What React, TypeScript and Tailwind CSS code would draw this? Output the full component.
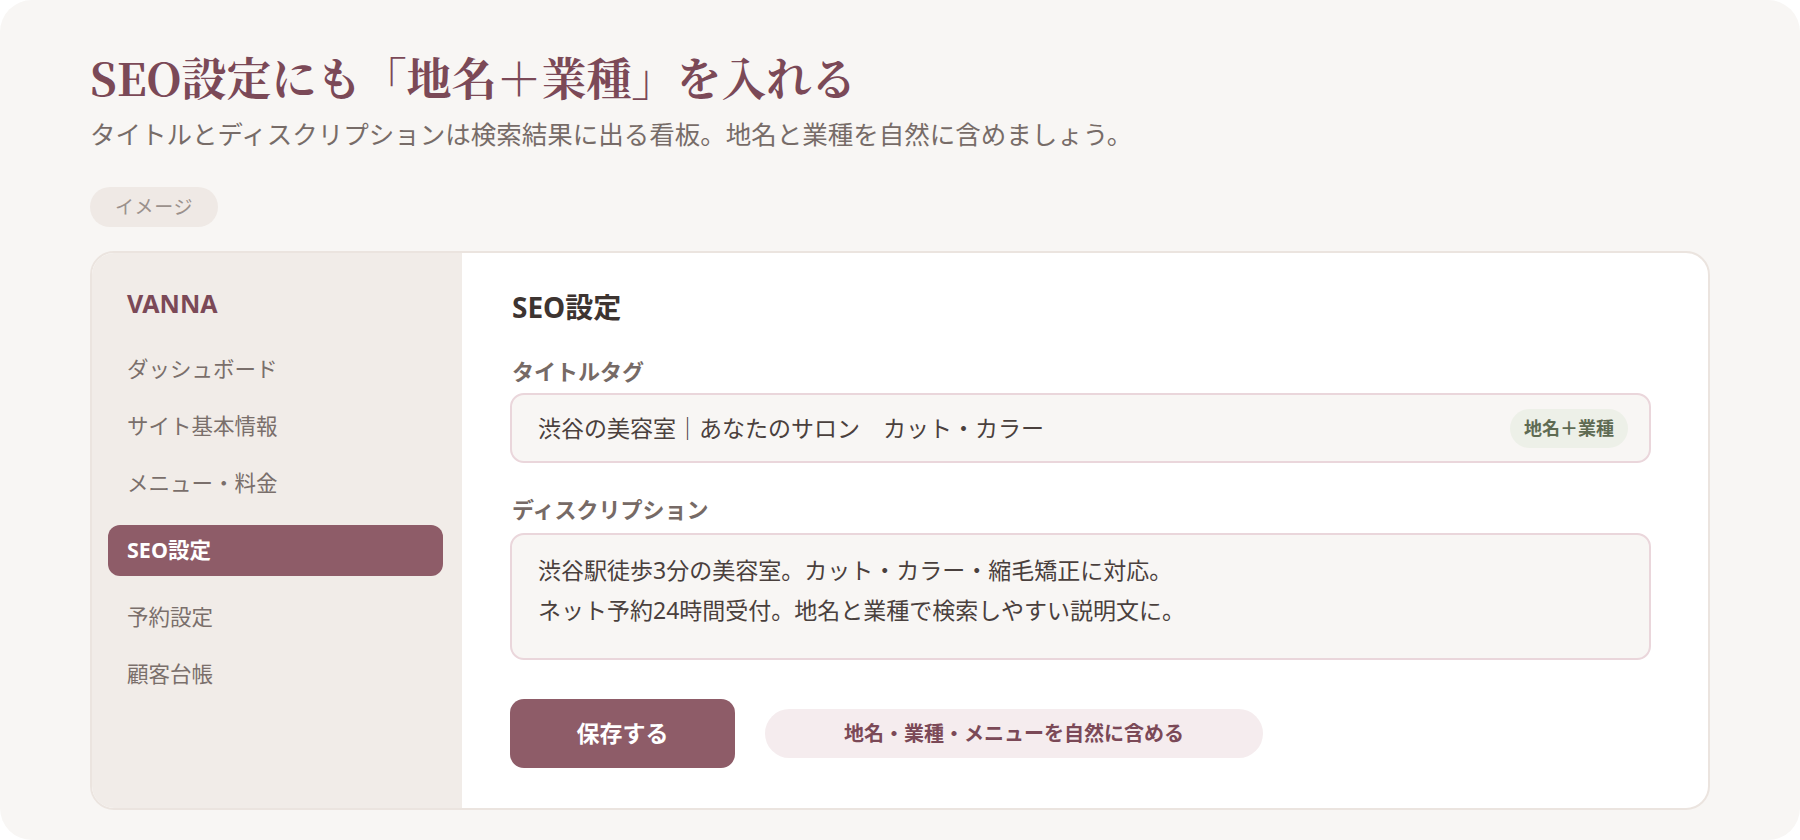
import React from "react";

const NAV = [
  { label: "ダッシュボード" },
  { label: "サイト基本情報" },
  { label: "メニュー・料金" },
  { label: "SEO設定", active: true },
  { label: "予約設定" },
  { label: "顧客台帳" },
];

const sans = { fontFamily: '"Noto Sans", "Noto Sans CJK JP", sans-serif' };

export default function App() {
  return (
    <div className="min-h-[840px] w-full bg-white" style={sans}>
      <div className="h-[840px] w-[1800px] rounded-[32px] bg-[#f8f6f4] px-[90px] pt-[48px]">
        {/* Header */}
        <h1
          className="text-[45px] leading-[58px] font-bold text-[#7b4957]"
          style={{ fontFamily: '"Noto Serif CJK JP", "Liberation Serif", "Noto Sans CJK JP", serif' }}
        >
          SEO設定にも「地名＋業種」を入れる
        </h1>
        <p className="mt-[10px] text-[25.5px] leading-[36px] text-[#776c68]">
          タイトルとディスクリプションは検索結果に出る看板。地名と業種を自然に含めましょう。
        </p>
        <div className="mt-[35px] inline-flex h-[40px] w-[128px] items-center justify-center rounded-full bg-[#efe9e5] text-[19px] tracking-[0.03em] text-[#9b918c]">
          イメージ
        </div>

        {/* Mock admin card */}
        <div className="mt-[24px] flex h-[559px] overflow-hidden rounded-[24px] border-2 border-[#ebe4df] bg-white">
          {/* Sidebar */}
          <aside className="w-[370px] shrink-0 bg-[#f1ece8] px-[16px] pt-[35px]">
            <div className="px-[19px] text-[25px] leading-[30px] font-bold text-[#7b4957]">VANNA</div>
            <nav className="mt-[29px] flex flex-col gap-[12px]">
              {NAV.map((item) =>
                item.active ? (
                  <div
                    key={item.label}
                    className="my-[7px] flex h-[51px] w-[335px] items-center rounded-[12px] bg-[#8e5c68] px-[19px] text-[21.5px] font-bold text-white"
                  >
                    {item.label}
                  </div>
                ) : (
                  <div
                    key={item.label}
                    className="flex h-[45px] items-center px-[19px] text-[21.5px] text-[#7a6f6b]"
                  >
                    {item.label}
                  </div>
                )
              )}
            </nav>
          </aside>

          {/* Content */}
          <main className="flex-1 pl-[48px] pr-[57px] pt-[36px]">
            <h2 className="pl-[2px] text-[28px] leading-[36px] font-bold text-[#3d3431]">SEO設定</h2>

            <div className="mt-[32px] pl-[2px] text-[22px] leading-[28px] font-bold text-[#766a66]">タイトルタグ</div>
            <div className="mt-[8px] flex h-[70px] items-center justify-between rounded-[14px] border-2 border-[#ead6db] bg-[#f8f6f4] pl-[26px] pr-[21px]">
              <span className="text-[23px] text-[#4a403d]">渋谷の美容室｜あなたのサロン　カット・カラー</span>
              <span className="flex h-[39px] items-center rounded-full bg-[#edf0e8] px-[14px] text-[18px] font-bold text-[#5f6b53]">
                地名＋業種
              </span>
            </div>

            <div className="mt-[32px] pl-[2px] text-[22px] leading-[28px] font-bold text-[#766a66]">ディスクリプション</div>
            <div className="mt-[10px] h-[127px] rounded-[14px] border-2 border-[#ead6db] bg-[#f8f6f4] pl-[26px] pt-[15px] text-[23px] leading-[40px] text-[#4a403d]">
              <p>渋谷駅徒歩3分の美容室。カット・カラー・縮毛矯正に対応。</p>
              <p>ネット予約24時間受付。地名と業種で検索しやすい説明文に。</p>
            </div>

            <div className="mt-[39px] flex items-center gap-[30px]">
              <button className="h-[69px] w-[225px] rounded-[14px] bg-[#8e5c68] text-[23px] font-bold text-white">
                保存する
              </button>
              <div className="flex h-[49px] w-[498px] items-center justify-center rounded-full bg-[#f5ecee] text-[20px] font-bold text-[#7b4957]">
                地名・業種・メニューを自然に含める
              </div>
            </div>
          </main>
        </div>
      </div>
    </div>
  );
}
